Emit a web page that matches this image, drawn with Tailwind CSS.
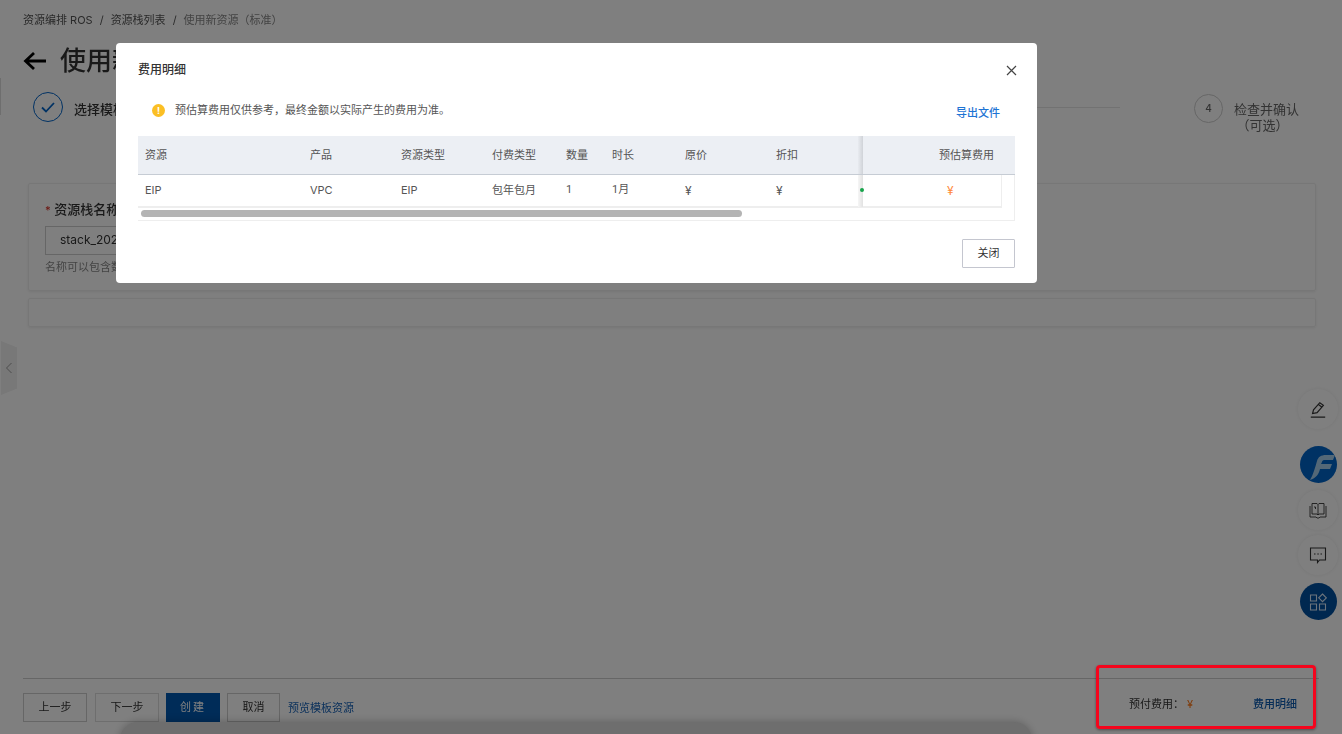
<!DOCTYPE html>
<html lang="zh-CN">
<head>
    <meta charset="UTF-8">
    <title>费用明细</title>
    <script src="https://cdn.jsdelivr.net/npm/@tailwindcss/browser@4"></script>
</head>
<body class="relative h-[734px] w-[1342px] overflow-hidden bg-white font-['Inter','Noto_Sans_CJK_SC',sans-serif] text-[#333] blur-[0.35px]">

    <!-- page under the dialog -->
    <div class="flex h-[734px] flex-col px-[23px]">
        <nav class="flex h-[41px] items-center gap-[7px] text-[11px] text-[#555]">
            <span>资源编排 ROS</span><span>/</span><span>资源栈列表</span><span>/</span><span class="text-[#888]">使用新资源（标准）</span>
        </nav>
        <div class="flex h-[39px] items-center gap-[13px]">
            <svg class="h-[24px] w-[24px]" viewBox="0 0 24 24" fill="none" stroke="#000" stroke-width="2.800"><path d="M23 12H2M11 4l-8.500 8 8.500 8"/></svg>
            <h1 class="text-[26px] font-medium">使用新</h1>
        </div>
        <div class="mt-[5px] flex h-[44px] items-center pl-[10px]">
            <span class="flex h-[30px] w-[30px] items-center justify-center rounded-full border border-[#0064c8]">
                <svg class="h-[16px] w-[16px]" viewBox="0 0 16 16" fill="none" stroke="#0064c8" stroke-width="1.800"><path d="M2 8.500l4 4 8-8.500"/></svg>
            </span>
            <span class="ml-[11px] mt-[6px] text-[13px] font-medium">选择模板</span>
            <span class="ml-[14px] h-px flex-1 bg-[#e4e4e4]"></span>
            <div class="ml-[74px] mr-[20px] flex items-start gap-[11px] self-start pt-[9px]">
                <span class="flex h-[29px] w-[29px] items-center justify-center rounded-full border border-[#ccc] text-[10px] font-medium text-[#666]">4</span>
                <span class="mt-[7px] text-center text-[13px] leading-[16px] text-[#666]">检查并确认<br><span class="pr-[8px]">（可选）</span></span>
            </div>
        </div>
        <section class="ml-[5px] mr-[3px] mt-[54px] h-[108px] rounded-[2px] border border-[#eee] pl-[16px] pt-[16px] shadow-[0_1px_3px_rgba(0,0,0,0.08)]">
            <label class="block text-[13px] font-medium"><span class="text-[11px] text-[#d93026]">*</span> 资源栈名称</label>
            <div class="mt-[6px] flex h-[29px] w-[400px] items-center border border-[#ccc] pl-[14px] text-[12px]">stack_20210101</div>
            <p class="mt-[4px] text-[11px] text-[#888]">名称可以包含数字、英文字母</p>
        </section>
        <section class="ml-[5px] mr-[3px] mt-[7px] h-[29px] rounded-[2px] border border-[#eee] shadow-[0_1px_3px_rgba(0,0,0,0.08)]"></section>

        <footer class="mt-auto flex h-[56px] items-start border-t border-[#ccc] pt-[14px] text-[11px]">
            <button class="h-[29px] w-[64px] border border-[#ccc]">上一步</button>
            <button class="ml-[8px] h-[29px] w-[64px] border border-[#ddd]">下一步</button>
            <button class="ml-[7px] h-[29px] w-[54px] bg-[#0058b0] tracking-[2px] text-white">创建</button>
            <button class="ml-[7px] h-[29px] w-[53px] border border-[#ccc]">取消</button>
            <a class="ml-[8px] mt-[7px] text-[#1a64b8]">预览模板资源</a>
            <span class="ml-auto mr-[22px] mt-[3px] flex w-[168px] items-center">
                <span>预付费用：</span><span class="ml-[3px] text-[#ff7a1a]">¥</span><a class="ml-auto font-medium text-[#0f5cb0]">费用明细</a>
            </span>
        </footer>
    </div>

    <!-- sidebar handle -->
    <div class="absolute left-[1px] top-[341px] flex h-[54px] w-[16px] items-center justify-center bg-[#f0f0f0] [clip-path:polygon(0_0,100%_12%,100%_88%,0_100%)]">
        <svg class="h-[12px] w-[8px]" viewBox="0 0 8 12" fill="none" stroke="#999"><path d="M6.500 1L1.500 6l5 5"/></svg>
    </div>
    <span class="absolute left-0 top-[78px] h-[37px] w-px bg-[#ddd]"></span>

    <!-- floating tools -->
    <div class="absolute left-[1298px] top-[389px] flex w-[40px] flex-col items-center">
        <span class="flex h-[40px] w-[40px] items-center justify-center rounded-full bg-white shadow-[0_0_4px_rgba(0,0,0,0.08)]">
            <svg class="h-[18px] w-[18px]" viewBox="0 0 20 20" fill="none" stroke="#333" stroke-width="1.300"><path d="M2 19h16M4 15l1-4 7-8 4 3-7 8-5 1zM10.500 5l4 3"/></svg>
        </span>
        <span class="mt-[17px] flex h-[37px] w-[37px] items-center justify-center overflow-hidden rounded-full bg-[#0064c8]">
            <svg class="h-[37px] w-[37px]" viewBox="0 0 37 37"><path d="M10 34c3-5 5-12 7-19 1-4 4-6 9-6h9l-2 5h-9c-1 0-2 1-2 2l-1 2h11l-2 5h-10c-1 5-4 9-10 11z" fill="#a8d0ee"/></svg>
        </span>
        <span class="mt-[7px] flex h-[40px] w-[40px] items-center justify-center rounded-full bg-white shadow-[0_0_4px_rgba(0,0,0,0.08)]">
            <svg class="h-[18px] w-[18px]" viewBox="0 0 18 18" fill="none" stroke="#333" stroke-width="0.900"><path d="M3 2.500h5l1 1 1-1h5v10.500h-5l-1 1-1-1H3zM9 3.500V14M1 5v11h6l1 1h2l1-1h6V5M5 6h1.500v2"/></svg>
        </span>
        <span class="mt-[5px] flex h-[40px] w-[40px] items-center justify-center rounded-full bg-white shadow-[0_0_4px_rgba(0,0,0,0.08)]">
            <svg class="h-[18px] w-[18px]" viewBox="0 0 18 18" fill="none" stroke="#333" stroke-width="1.100"><path d="M1.500 2h15v12h-6l-2 2.500V14h-7z"/><path d="M5 8h1.500M8.300 8h1.500M11.500 8H13"/></svg>
        </span>
        <span class="mt-[8px] flex h-[37px] w-[37px] items-center justify-center rounded-full bg-[#0050a0]">
            <svg class="h-[18px] w-[18px]" viewBox="0 0 18 18" fill="none" stroke="#d8e8f8" stroke-width="1.100"><path d="M1.500 2h6v6h-6zM1.500 11h6v6h-6zM10.500 11h6v6h-6zM13.500 1l3.800 3.800-3.800 3.800-3.800-3.800z"/></svg>
        </span>
    </div>

    <!-- mask -->
    <div class="absolute inset-0 bg-black/50"></div>

    <!-- dark strip at the bottom edge -->
    <div class="absolute left-[120px] top-[722px] h-[40px] w-[912px] rounded-t-[18px] bg-[#6e6e6e] shadow-[0_0_8px_rgba(0,0,0,0.25)]"></div>

    <!-- dialog -->
    <div class="absolute left-[116px] top-[43px] flex h-[240px] w-[921px] flex-col rounded-[4px] bg-white px-[22px] text-[11px] text-[#555]">
        <div class="flex h-[52px] items-center justify-between pt-[2px]">
            <h2 class="text-[12px] font-medium text-[#333]">费用明细</h2>
            <svg class="mr-[-2px] h-[11px] w-[11px]" viewBox="0 0 11 11" fill="none" stroke="#444" stroke-width="1.200"><path d="M1 1l9 9M10 1l-9 9"/></svg>
        </div>
        <div class="flex h-[32px] items-center pl-[14px] pr-[15px]">
            <span class="mb-[2px] flex h-[13px] w-[13px] items-center justify-center rounded-full bg-[#fbbf24] text-[9px] font-bold leading-none text-white">!</span>
            <span class="mb-[2px] ml-[10px]">预估算费用仅供参考，最终金额以实际产生的费用为准。</span>
            <a class="ml-auto mt-[4px] font-medium text-[#1e74d4]">导出文件</a>
        </div>

        <div class="relative mt-[9px] h-[85px] w-[877px] border-b border-r border-[#eee]">
            <div class="grid h-[39px] w-[877px] grid-cols-[165px_91px_91px_74px_46px_73px_91px_94px_1fr] items-center border-b border-[#c6ccd4] bg-[#eceff4] pt-[1px] [&>span]:pl-[7px]">
                <span>资源</span><span>产品</span><span>资源类型</span><span>付费类型</span><span>数量</span><span>时长</span><span>原价</span><span>折扣</span>
                <span class="justify-self-end pr-[21px]">预估算费用</span>
            </div>
            <div class="grid h-[33px] w-[864px] grid-cols-[165px_91px_91px_74px_46px_73px_91px_94px_1fr] items-center border-b-2 border-r border-[#eee] [&>span]:pl-[7px]">
                <span>EIP</span><span>VPC</span><span>EIP</span><span>包年包月</span>
                <span class="font-['Roboto','Noto_Sans_CJK_SC',sans-serif]">1</span><span class="font-['Roboto','Noto_Sans_CJK_SC',sans-serif]">1月</span>
                <span class="text-[12px]">¥</span><span class="text-[12px]">¥</span>
                <span class="ml-[77px] text-[12px] text-[#ff8a3c]">¥</span>
            </div>
            <span class="absolute left-[720px] top-0 h-[38px] w-[5px] bg-gradient-to-r from-[#e8ebf0] to-[#d0d3d8]"></span>
            <span class="absolute left-[720px] top-[39px] h-[32px] w-[5px] bg-gradient-to-r from-[#f6f6f6] to-[#e2e2e2]"></span>
            <span class="absolute left-[722px] top-[52px] h-[4px] w-[4px] rounded-full bg-[#16a34a]"></span>
            <div class="absolute bottom-[3px] left-[3px] h-[7px] w-[601px] rounded-full bg-[#b4b4b4]"></div>
        </div>

        <div class="mt-[18px] flex justify-end">
            <button class="h-[29px] w-[53px] rounded-[1px] border border-[#c4c6cf] text-[#333]">关闭</button>
        </div>
    </div>

    <!-- annotation -->
    <div class="absolute left-[1096px] top-[665px] h-[64px] w-[220px] rounded-[4px] border-[3px] border-[#f5051d] shadow-[0_1px_3px_rgba(0,0,0,0.4)]"></div>
</body>
</html>
